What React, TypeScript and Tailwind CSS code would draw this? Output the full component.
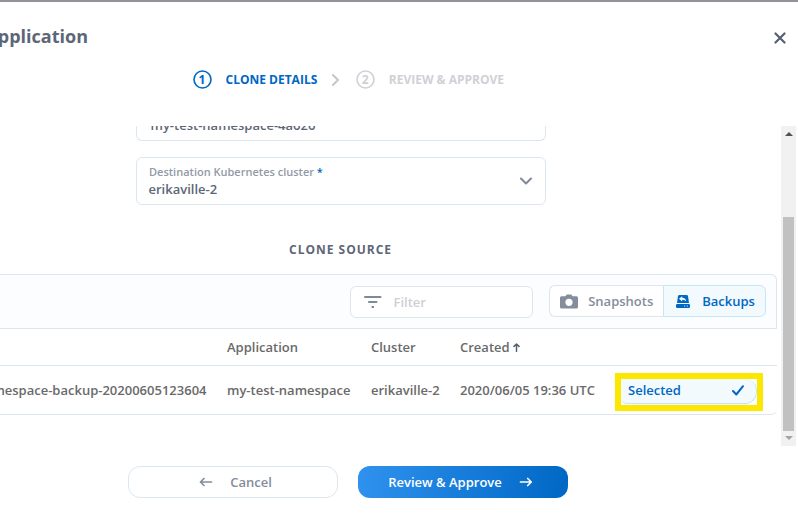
import type { ReactNode } from "react";

function Step({ n, label, active }: { n: number; label: string; active?: boolean }) {
  return (
    <div className={`flex items-center ${active ? "text-[#0067c5]" : "text-[#cfd1d6]"}`}>
      <span className="grid size-[19px] place-items-center text-xs leading-none">
        <svg className="col-start-1 row-start-1" width="19" height="19" viewBox="0 0 19 19" fill="none" stroke="currentColor" strokeWidth="1.6">
          <circle cx="9.5" cy="9.5" r="8.5" />
        </svg>
        <span className="col-start-1 row-start-1">{n}</span>
      </span>
      <span className="ml-[14px] text-xs">{label}</span>
    </div>
  );
}

function Arrow({ className, d }: { className: string; d: string }) {
  return (
    <svg className={className} width="14" height="10" viewBox="0 0 14 10" fill="none" stroke="currentColor" strokeWidth="1.7" strokeLinecap="round" strokeLinejoin="round">
      <path d={d} />
    </svg>
  );
}

function Cell({ className, children }: { className: string; children: ReactNode }) {
  return <div className={`shrink-0 whitespace-nowrap pt-[2px] ${className}`}>{children}</div>;
}

function Header() {
  return (
    <header className="flex h-[50px] items-start justify-between pt-[22px]">
      <h1 className="flex w-[88px] justify-end overflow-hidden text-lg font-bold leading-6 text-[#5d6678]">pplication</h1>
      <svg className="mr-3 mt-2" width="12" height="12" viewBox="0 0 12 12" stroke="#566073" strokeWidth="2.2" strokeLinecap="round">
        <path d="M1.5 1.5L10.5 10.5M10.5 1.5L1.5 10.5" />
      </svg>
    </header>
  );
}

function Scrollbar() {
  return (
    <div className="mr-0.5 flex w-[15px] shrink-0 flex-col items-center bg-[#f1f1f1]">
      <svg className="mt-[6px]" width="8" height="4" viewBox="0 0 8 4" fill="#505050"><path d="M0 4L4 0L8 4Z" /></svg>
      <div className="mt-[81px] h-[214px] w-[11px] bg-[#c1c1c1]" />
      <svg className="mt-[5px]" width="8" height="4" viewBox="0 0 8 4" fill="#a3a3a3"><path d="M0 0H8L4 4Z" /></svg>
    </div>
  );
}

function Toolbar() {
  return (
    <div className="flex h-[55px] w-[777px] items-start justify-end rounded-tr-md border-y border-r border-[#dce6ef] bg-[#fcfdff] pr-[10px] pt-[10px]">
      <div className="mr-4 mt-px flex h-8 w-[183px] items-center rounded-md border border-[#dce6ef] bg-white pl-[12.5px] text-[#cdd0d5]">
        <svg width="18" height="12" viewBox="0 0 18 12" fill="#7e899a">
          <path d="M1 0H16.5Q17.5 0 17.5 1T16.5 2H1Q0 2 0 1T1 0ZM5 5H12.5Q13.5 5 13.5 6T12.5 7H5Q4 7 4 6T5 5ZM7.6 10H10V12H7.6Z" />
        </svg>
        <span className="ml-[12px] pt-px">Filter</span>
      </div>
      <div className="flex h-8 w-[217px]">
        <div className="flex w-[114px] items-center rounded-l-md border-y border-l border-[#dce6ef] bg-white pl-[10px] text-[#848d9b]">
          <svg width="18" height="15" viewBox="0 0 18 15" fill="currentColor">
            <path fillRule="evenodd" d="M5.5 2.2L6.7.5H11.3L12.5 2.2H16.5Q18 2.2 18 3.7V13Q18 14.5 16.5 14.5H1.5Q0 14.5 0 13V3.7Q0 2.2 1.5 2.2ZM9 4.7A3.6 3.6 0 1 0 9 11.9A3.6 3.6 0 1 0 9 4.7Z" />
          </svg>
          <span className="ml-[10.2px] pt-[2px]">Snapshots</span>
        </div>
        <div className="flex w-[103px] items-center rounded-r-md border border-[#c5e6f7] bg-[#f2fafe] pl-3 text-[#0067c5]">
          <svg width="14" height="13" viewBox="0 0 14 13" fill="currentColor">
            <path fillRule="evenodd" d="M3.5 0H10.5Q11.8 0 12 1L13 8H1L2 1Q2.2 0 3.5 0ZM6.2 1.2L3 3.8L6.2 6.4V4.9Q8.8 4.6 10.2 6.6Q10 2.9 6.2 2.7Z" />
            <path fillRule="evenodd" d="M1.2 9H12.8Q14 9 14 10.2V11.8Q14 13 12.8 13H1.2Q0 13 0 11.8V10.2Q0 9 1.2 9ZM8.2 10.5V11.5H9.2V10.5ZM10.8 10.5V11.5H11.8V10.5Z" />
          </svg>
          <span className="ml-[12.2px] pt-[2px]">Backups</span>
        </div>
      </div>
    </div>
  );
}

function SourceTable() {
  return (
    <div className="w-[777px] text-[#6a6a6a]">
      <div className="flex h-[37px] items-center border-b border-[#dce6ef]">
        <Cell className="ml-[227px] w-36">Application</Cell>
        <Cell className="w-[89px]">Cluster</Cell>
        <Cell className="flex items-center">
          Created
          <svg className="mb-0.5 ml-[3px]" width="7" height="9" viewBox="0 0 7 9" fill="none" stroke="#566073" strokeWidth="1.5" strokeLinecap="round" strokeLinejoin="round">
            <path d="M3.5 8.3V1M1 3.4L3.5 1L6 3.4" />
          </svg>
        </Cell>
      </div>
      <div className="flex h-[49px] w-[777px] items-center rounded-br-md border-b border-[#dce6ef]">
        <Cell className="flex w-[206.5px] justify-end overflow-hidden">mespace-backup-20200605123604</Cell>
        <Cell className="ml-[20.5px] w-36">my-test-namespace</Cell>
        <Cell className="w-[89px]">erikaville-2</Cell>
        <Cell className="w-[155px]">2020/06/05 19:36 UTC</Cell>
        <div className="mt-[4px] flex h-[38px] w-[148px] shrink-0 items-start border-6 border-[#fbe700]">
          <div className="flex h-[25px] w-[136px] items-center justify-between rounded-r-[12px] rounded-bl-md border-b border-r border-[#c5e6f7] bg-[#f2fafe] pl-[7px] pr-3 text-[#0067c5]">
            <span>Selected</span>
            <svg className="mb-0.5" width="12" height="11" viewBox="0 0 12 11" fill="none" stroke="currentColor" strokeWidth="2" strokeLinecap="round" strokeLinejoin="round">
              <path d="M1 6L4.3 9.5L11 1.2" />
            </svg>
          </div>
        </div>
      </div>
    </div>
  );
}

export default function App() {
  return (
    <div className="flex h-[519px] w-[798px] flex-col overflow-hidden border-t-2 border-[#909398] bg-white font-['Open_Sans',sans-serif] text-[13px] font-semibold text-[#5d6678]">
      <Header />
      <nav className="flex h-[55px] items-center pl-[192.5px] font-bold">
        <Step n={1} label="CLONE DETAILS" active />
        <svg className="ml-[13.5px] mr-[16px]" width="9" height="12" viewBox="0 0 9 12" fill="none" stroke="#c4c7cc" strokeWidth="2" strokeLinecap="round" strokeLinejoin="round">
          <path d="M2 1L7 6L2 11" />
        </svg>
        <Step n={2} label="REVIEW & APPROVE" />
      </nav>
      <div className="mt-[19px] flex h-[320px] shrink-0 overflow-hidden">
        <main className="w-[781px] shrink-0">
          <div className="ml-[136px] h-[15px] w-[410px] overflow-hidden rounded-b-md border-x border-b border-[#dce6ef] pl-[13.5px]">
            <div className="-mt-[10px] leading-[18px]">my-test-namespace-4a626</div>
          </div>
          <div className="ml-[136px] mt-4 flex h-12 w-[410px] items-center justify-between rounded-md border border-[#dce6ef] pl-3 pr-[13.5px]">
            <div>
              <div className="text-[11px] leading-[15px] text-[#929aa6]">Destination Kubernetes cluster <span className="text-[#0067c5]">*</span></div>
              <div className="-ml-[0.5px] mt-px leading-[18px]">erikaville-2</div>
            </div>
            <svg width="12" height="8" viewBox="0 0 12 8" fill="none" stroke="#7e899a" strokeWidth="2" strokeLinecap="round" strokeLinejoin="round">
              <path d="M1 1.5L6 6.5L11 1.5" />
            </svg>
          </div>
          <h2 className="ml-[289px] mt-[37px] h-8 text-xs font-bold leading-4 tracking-[1px]">CLONE SOURCE</h2>
          <Toolbar />
          <SourceTable />
        </main>
        <Scrollbar />
      </div>
      <footer className="mt-5 flex gap-5 pl-32">
        <button className="flex h-8 w-[210px] items-center rounded-[12px] border border-[#dce6ef] pl-[70px] text-[#848d9b]">
          <Arrow className="" d="M12.5 5H1.5M5 1.5L1.5 5L5 8.5" />
          <span className="ml-[17.2px] pt-[2px]">Cancel</span>
        </button>
        <button className="flex h-8 w-[210px] items-center rounded-[12px] bg-linear-[100deg] from-[#2f92ee] to-[#0067c5] pl-[30.2px] text-white">
          <span className="pt-[2px]">Review &amp; Approve</span>
          <Arrow className="ml-[17px]" d="M1.5 5H12.2M8.7 1.5L12.2 5L8.7 8.5" />
        </button>
      </footer>
    </div>
  );
}
